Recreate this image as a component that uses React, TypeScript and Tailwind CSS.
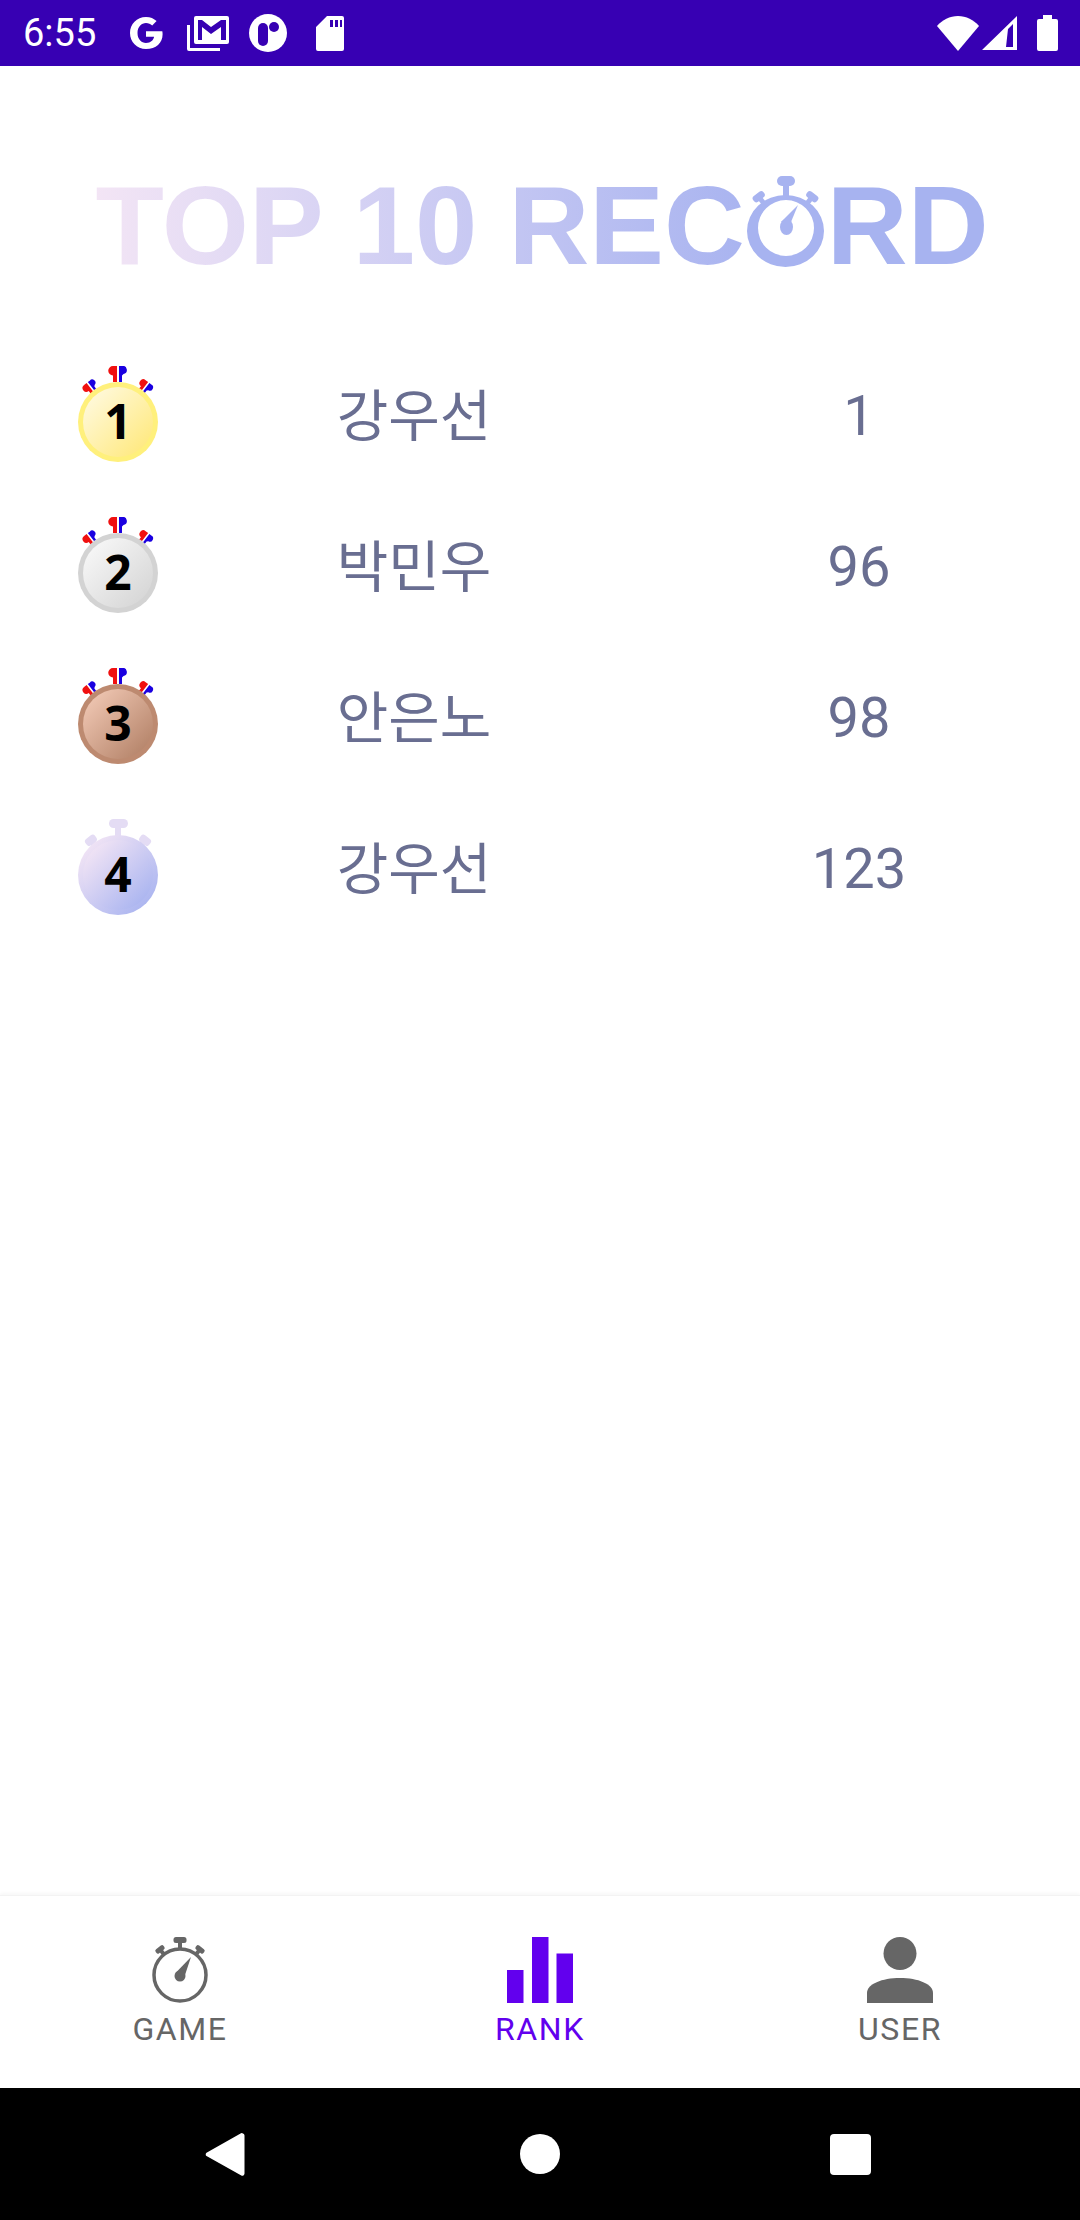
import React from "react";

type Rank = {
  place: number;
  name: string;
  score: number;
  ring: string;
  from: string;
  to: string;
};

const ranks: Rank[] = [
  { place: 1, name: "강우선", score: 1, ring: "#fff07c", from: "#fff9dc", to: "#ffe97f" },
  { place: 2, name: "박민우", score: 96, ring: "#d3d3d3", from: "#f7f7f7", to: "#d6d6d6" },
  { place: 3, name: "안은노", score: 98, ring: "#bd8a70", from: "#efc6b2", to: "#b5846a" },
  { place: 4, name: "강우선", score: 123, ring: "", from: "#f3e5f5", to: "#a9b4f0" },
];

const Mallets = () => (
  <g>
    <path d="M35 16V9.5a4.5 4.5 0 1 1 0-9.5h4v16z" fill="#f01010" />
    <path d="M41 16V0h3a4 4 0 0 1 1.5 8L44 9.5V16z" fill="#1a00e0" />
  </g>
);

const Medal = ({ rank }: { rank: Rank }) => {
  const plain = rank.place === 4;
  const id = `medal-${rank.place}`;
  return (
    <svg width="80" height="96" viewBox="0 0 80 96" className="block">
      <defs>
        <linearGradient id={id} x1="0.1" y1="0.1" x2="0.9" y2="0.9">
          <stop offset="0" stopColor={rank.from} />
          <stop offset="1" stopColor={rank.to} />
        </linearGradient>
      </defs>
      {plain ? (
        <g fill="#e4dcf4">
          <rect x="31" y="0" width="19" height="9" rx="4.5" />
          <rect x="37" y="8" width="6" height="10" />
          <g transform="rotate(-38 40 56)">
            <rect x="34" y="8" width="12" height="8" rx="3" />
            <rect x="37" y="15" width="6" height="6" />
          </g>
          <g transform="rotate(38 40 56)">
            <rect x="34" y="8" width="12" height="8" rx="3" />
            <rect x="37" y="15" width="6" height="6" />
          </g>
        </g>
      ) : (
        <g>
          <Mallets />
          <g transform="rotate(-38 40 56) translate(8 6) scale(0.8)">
            <Mallets />
          </g>
          <g transform="rotate(38 40 56) translate(8 6) scale(0.8)">
            <Mallets />
          </g>
        </g>
      )}
      <circle cx="40" cy="56" r="40" fill={plain ? `url(#${id})` : rank.ring} />
      <circle cx="40" cy="56" r="35" fill={`url(#${id})`} />
      <text
        x="40"
        y="73"
        textAnchor="middle"
        fontSize="48"
        fontWeight="700"
        fontFamily="'Open Sans', sans-serif"
        fill="#000"
      >
        {rank.place}
      </text>
    </svg>
  );
};

const TitleWatch = () => (
  <svg width="78" height="92" viewBox="0 0 78 92" fill="#a7b3f0" className="mb-[15px] ml-[2px] mr-[2px] shrink-0">
    <rect x="30" y="1" width="18" height="10" rx="5" />
    <rect x="36" y="10" width="6" height="12" />
    <g transform="rotate(-38 38.500 56)">
      <rect x="32" y="9" width="13" height="7" rx="3" />
      <rect x="36" y="15" width="5" height="6" />
    </g>
    <g transform="rotate(38 38.500 56)">
      <rect x="32" y="9" width="13" height="7" rx="3" />
      <rect x="36" y="15" width="5" height="6" />
    </g>
    <path
      fillRule="evenodd"
      d="M0 56a38.500 36 0 1 0 77 0a38.500 36 0 1 0-77 0zM11 53a28 28 0 1 1 56 0a28 28 0 1 1-56 0z"
    />
    <ellipse cx="39.500" cy="52" rx="6.500" ry="8" />
    <path d="M51 30 44 47 34 47z" />
  </svg>
);

const StatusBar = () => (
  <div className="flex h-[66px] items-center justify-between bg-[#3700b3] pl-[23px] pr-[22px] text-white">
    <div className="flex items-center">
      <span className="w-[106px] font-['Roboto',sans-serif] text-[38px] leading-none">6:55</span>
      <svg width="34" height="32" viewBox="0 0 34 32" fill="#fff">
        <path d="M17 0c4.400 0 7.900 1.600 10.600 4.100l-4.400 4.300C21.600 6.900 19.500 6 17 6 12.400 6 8.500 9.900 8.500 16S12.400 26 17 26c4.900 0 7.500-2.900 8.100-6.200H17v-5.600h16.300c.2 1 .3 1.900.3 3C33.600 26 27 32 17 32 7.800 32 1 24.800 1 16S7.800 0 17 0z" />
      </svg>
      <svg width="42" height="36" viewBox="0 0 42 36" fill="#fff" className="ml-[24px] mt-[1px]">
        <path d="M0 9h3v23h30v3H2a2 2 0 0 1-2-2z" />
        <path fillRule="evenodd" d="M9 0h31a2 2 0 0 1 2 2v24a2 2 0 0 1-2 2H9a2 2 0 0 1-2-2V2a2 2 0 0 1 2-2zm2 4v20h4V11l9 7 10-7v13h5V4h-5l-10 7-9-7z" />
      </svg>
      <svg width="38" height="38" viewBox="0 0 38 38" className="ml-[20px]">
        <circle cx="19" cy="19" r="19" fill="#fff" />
        <rect x="9" y="9" width="10" height="23" rx="5" fill="#3700b3" />
        <circle cx="25" cy="13" r="5" fill="#3700b3" />
      </svg>
      <svg width="28" height="35" viewBox="0 0 28 35" fill="#fff" className="ml-[29px]">
        <path fillRule="evenodd" d="M11 0h15a2 2 0 0 1 2 2v31a2 2 0 0 1-2 2H2a2 2 0 0 1-2-2V11zm3 4v7h3V4zm5 0v7h3V4zm5 0v7h2V4z" />
      </svg>
    </div>
    <div className="flex items-center">
      <svg width="42" height="35" viewBox="0 0 42 35" fill="#fff">
        <path d="M21 35 0 10C5 4 13 0 21 0s16 4 21 10z" />
      </svg>
      <svg width="35" height="35" viewBox="0 0 35 35" fill="#fff" className="ml-[3px]">
        <path fillRule="evenodd" d="M35 0v34H0zM31 8l-5 5-2 18h7z" />
      </svg>
      <svg width="21" height="36" viewBox="0 0 21 36" fill="#fff" className="ml-[20px]">
        <path d="M6 0h9v4h4a2 2 0 0 1 2 2v28a2 2 0 0 1-2 2H2a2 2 0 0 1-2-2V6a2 2 0 0 1 2-2h4z" />
      </svg>
    </div>
  </div>
);

const BottomNav = () => (
  <div className="grid h-[193px] grid-cols-3 border-t border-[#f3f3f3] bg-white pt-[41px] shadow-[0_-2px_3px_rgba(0,0,0,0.03)]">
    <div className="flex flex-col items-center text-[#666666]">
      <svg width="66" height="66" viewBox="0 0 66 66" fill="#666666">
        <rect x="26.500" y="0" width="13" height="6" rx="2.500" />
        <rect x="31" y="5" width="4" height="7" />
        <g transform="rotate(-38 33 38)">
          <rect x="28" y="3" width="10" height="5" rx="2" />
          <rect x="31" y="7" width="4" height="5" />
        </g>
        <g transform="rotate(38 33 38)">
          <rect x="28" y="3" width="10" height="5" rx="2" />
          <rect x="31" y="7" width="4" height="5" />
        </g>
        <circle cx="33" cy="38" r="26" fill="none" stroke="#666666" strokeWidth="3.500" />
        <circle cx="33" cy="39" r="5.500" />
        <path d="M28.500 36 44 20 37 41z" />
      </svg>
      <span className="mt-[7px] font-['Roboto',sans-serif] text-[32px] leading-[38px] tracking-[0.05em]">GAME</span>
    </div>
    <div className="flex flex-col items-center text-[#6200ee]">
      <svg width="66" height="66" viewBox="0 0 66 66" fill="#6200ee">
        <rect x="0" y="33" width="16.500" height="33" />
        <rect x="25" y="0" width="16.500" height="66" />
        <rect x="49.500" y="16.500" width="16.500" height="49.500" />
      </svg>
      <span className="mt-[7px] font-['Roboto',sans-serif] text-[32px] leading-[38px] tracking-[0.05em]">RANK</span>
    </div>
    <div className="flex flex-col items-center text-[#666666]">
      <svg width="66" height="66" viewBox="0 0 66 66" fill="#666666">
        <circle cx="33" cy="16.500" r="16.500" />
        <path d="M0 66V56C0 47 15 41 33 41s33 6 33 15v10z" />
      </svg>
      <span className="mt-[7px] font-['Roboto',sans-serif] text-[32px] leading-[38px] tracking-[0.05em]">USER</span>
    </div>
  </div>
);

const NavBar = () => (
  <div className="flex h-[132px] items-center justify-center bg-black">
    <div className="flex w-[315px] justify-center">
      <svg width="40" height="45" viewBox="0 0 40 45" fill="#fff">
        <path d="M38 1.500a2.200 2.200 0 0 1 1.500 2v38a2.200 2.200 0 0 1-3.200 2L1.500 24a2 2 0 0 1 0-3.200L36 1.200a2 2 0 0 1 2 .3z" />
      </svg>
    </div>
    <div className="flex w-[315px] justify-center">
      <div className="h-10 w-10 rounded-full bg-white" />
    </div>
    <div className="flex w-[315px] justify-center pr-[9px]">
      <div className="h-[41px] w-[41px] rounded-[4px] bg-white" />
    </div>
  </div>
);

export default function App() {
  return (
    <div className="flex h-[2220px] w-[1080px] flex-col overflow-hidden bg-white">
      <StatusBar />
      <main className="flex-1">
        <h1 className="mt-[104px] flex items-end justify-center pl-[4px] font-['Liberation_Sans',sans-serif] text-[112px] font-bold leading-[112px]">
          <span className="bg-linear-to-r from-[#f3e5f5] to-[#a9b4f0] bg-clip-text text-transparent">
            TOP 10 REC
          </span>
          <TitleWatch />
          <span className="text-[#a7b3f0]">RD</span>
        </h1>
        <div className="mt-[57px] flex flex-col">
          {ranks.map((rank) => (
            <div key={rank.place} className="flex h-[151px] items-center text-[#696e91]">
              <div className="h-[97px] w-[236px] shrink-0 pl-[78px]">
                <Medal rank={rank} />
              </div>
              <span className="w-[356px] shrink-0 pb-[5px] text-center font-['Noto_Sans_CJK_KR',sans-serif] text-[56px] leading-none">
                {rank.name}
              </span>
              <span className="w-[488px] shrink-0 pl-[46px] pt-[3px] text-center font-['Roboto',sans-serif] text-[56px] leading-none">
                {rank.score}
              </span>
            </div>
          ))}
        </div>
      </main>
      <BottomNav />
      <NavBar />
    </div>
  );
}
